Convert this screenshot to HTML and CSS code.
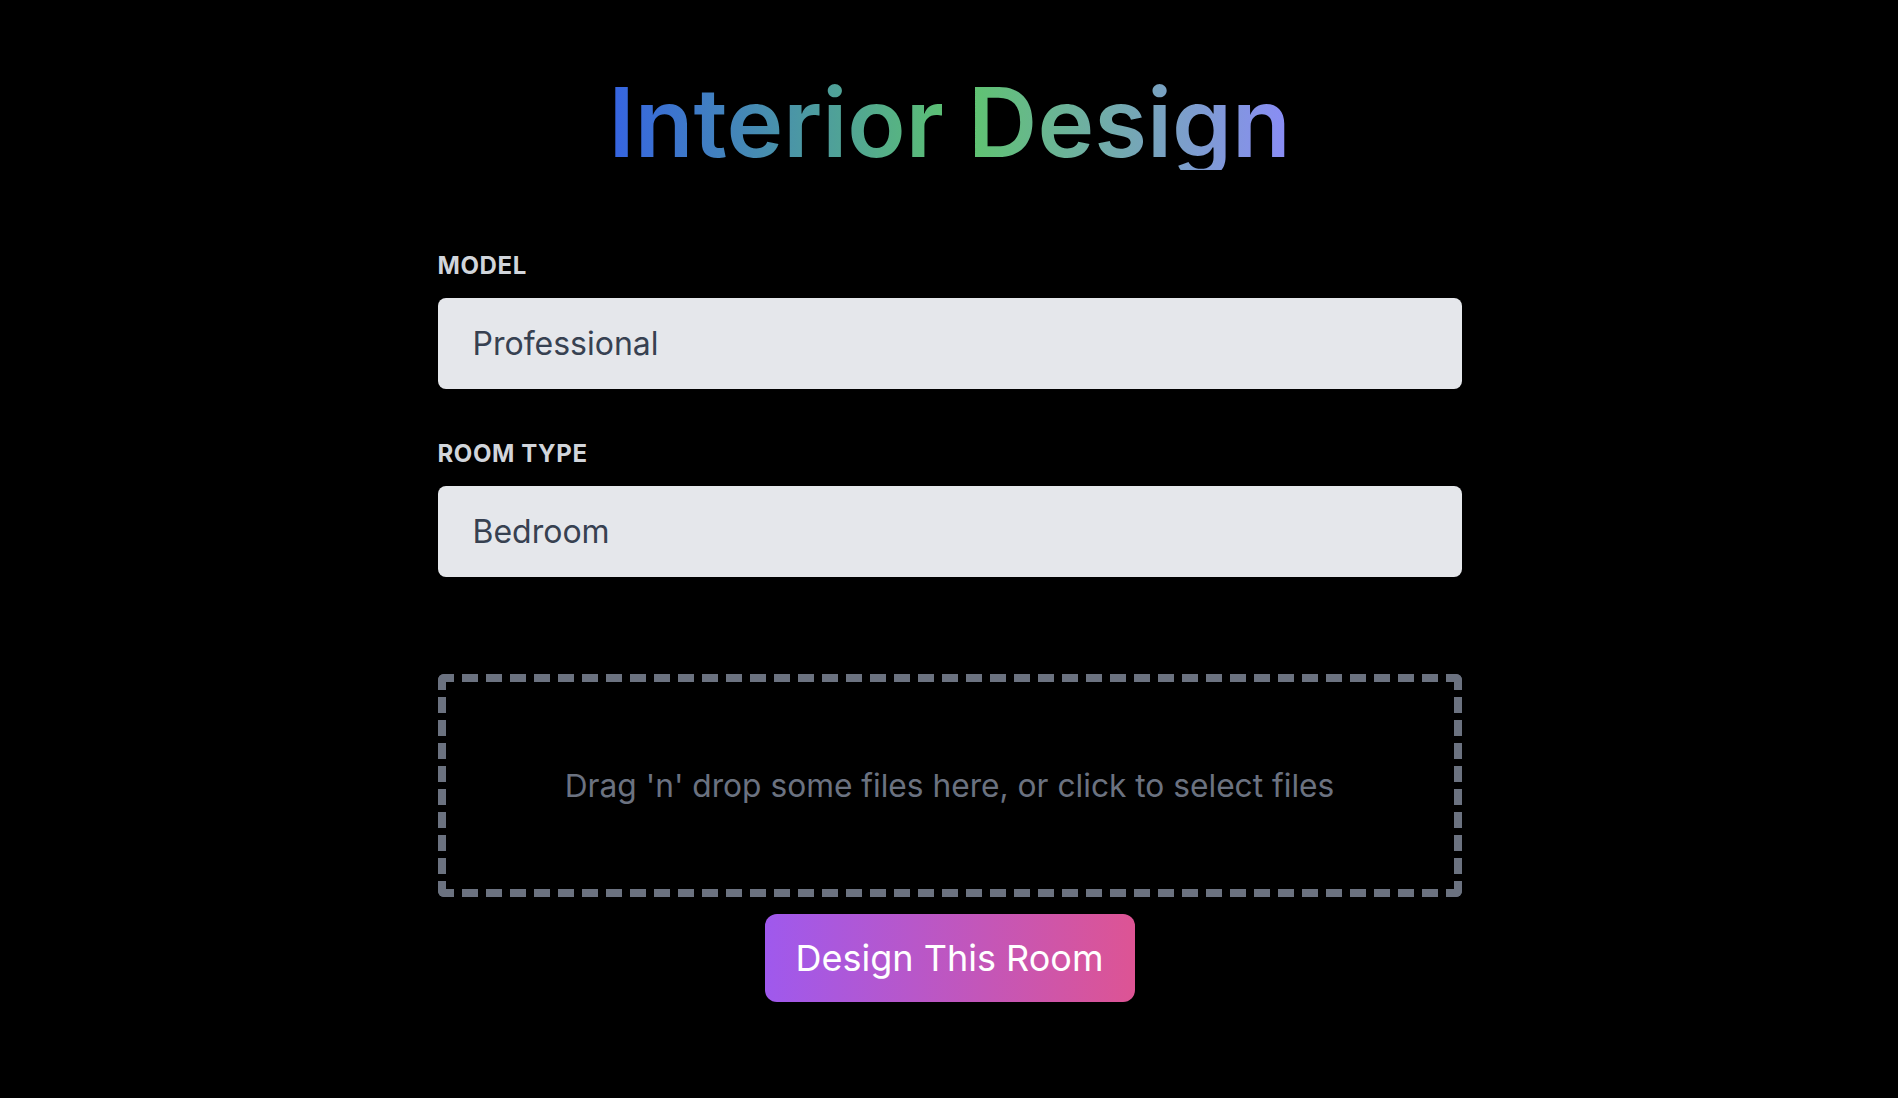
FILE: index.html
```html
<!DOCTYPE html>
<html lang="en">
<head>
<meta charset="utf-8">
<title>Interior Design</title>
<link rel="stylesheet" href="styles.css">
</head>
<body>
<main class="page">
  <h1 class="title"><span class="title-text">Interior Design</span></h1>
  <form class="form">
    <div class="field">
      <label class="label">MODEL</label>
      <div class="select">Professional</div>
    </div>
    <div class="field">
      <label class="label">ROOM TYPE</label>
      <div class="select">Bedroom</div>
    </div>
    <div class="dropzone">
      <p class="drop-text">Drag 'n' drop some files here, or click to select files</p>
    </div>
    <div class="actions">
      <button type="button" class="btn">Design This Room</button>
    </div>
  </form>
</main>
</body>
</html>
```
FILE: styles.css
```css
html, body {
  margin: 0;
  padding: 0;
  background: #000;
}
body {
  font-family: Inter, "Noto Sans", sans-serif;
  color: #fff;
}
.page {
  width: 1024px;
  margin: 0 auto;
  padding-top: 74px;
  padding-left: 1px;
}
.title {
  margin: 0;
  text-align: center;
  font-size: 96px;
  line-height: 96px;
  font-weight: 600;
}
.title-text {
  display: inline-block;
  line-height: 96px;
  background: linear-gradient(90deg, #3563e3 0%, #5ec46e 52%, #8a8cf7 100%);
  -webkit-background-clip: text;
  background-clip: text;
  color: transparent;
}
.form {
  margin-top: 79px;
  display: flex;
  flex-direction: column;
}
.field {
  display: flex;
  flex-direction: column;
}
.field + .field {
  margin-top: 48px;
}
.label {
  font-size: 24px;
  line-height: 32px;
  font-weight: 700;
  letter-spacing: 0.6px;
  color: #d1d5db;
  margin-top: 1px;
  margin-bottom: 16px;
}
.select {
  height: 91px;
  box-sizing: border-box;
  padding: 0 35px;
  display: flex;
  align-items: center;
  background: #e5e7eb;
  border-radius: 8px;
  color: #374151;
  font-size: 32px;
}
.dropzone {
  margin-top: 97px;
  height: 223px;
  box-sizing: border-box;
  border: 8px dashed #6b7280;
  border-radius: 6px;
  display: flex;
  align-items: center;
  justify-content: center;
}
.drop-text {
  margin: 0;
  color: #6b7280;
  font-size: 31.7px;
}
.actions {
  display: flex;
  justify-content: center;
  margin-top: 17px;
}
.btn {
  width: 370px;
  height: 88px;
  border: 0;
  border-radius: 12px;
  background: linear-gradient(90deg, #9f59ed 0%, #dd5494 100%);
  color: #fff;
  font-family: Inter, "Noto Sans", sans-serif;
  font-size: 36px;
  font-weight: 400;
  cursor: pointer;
}
```
